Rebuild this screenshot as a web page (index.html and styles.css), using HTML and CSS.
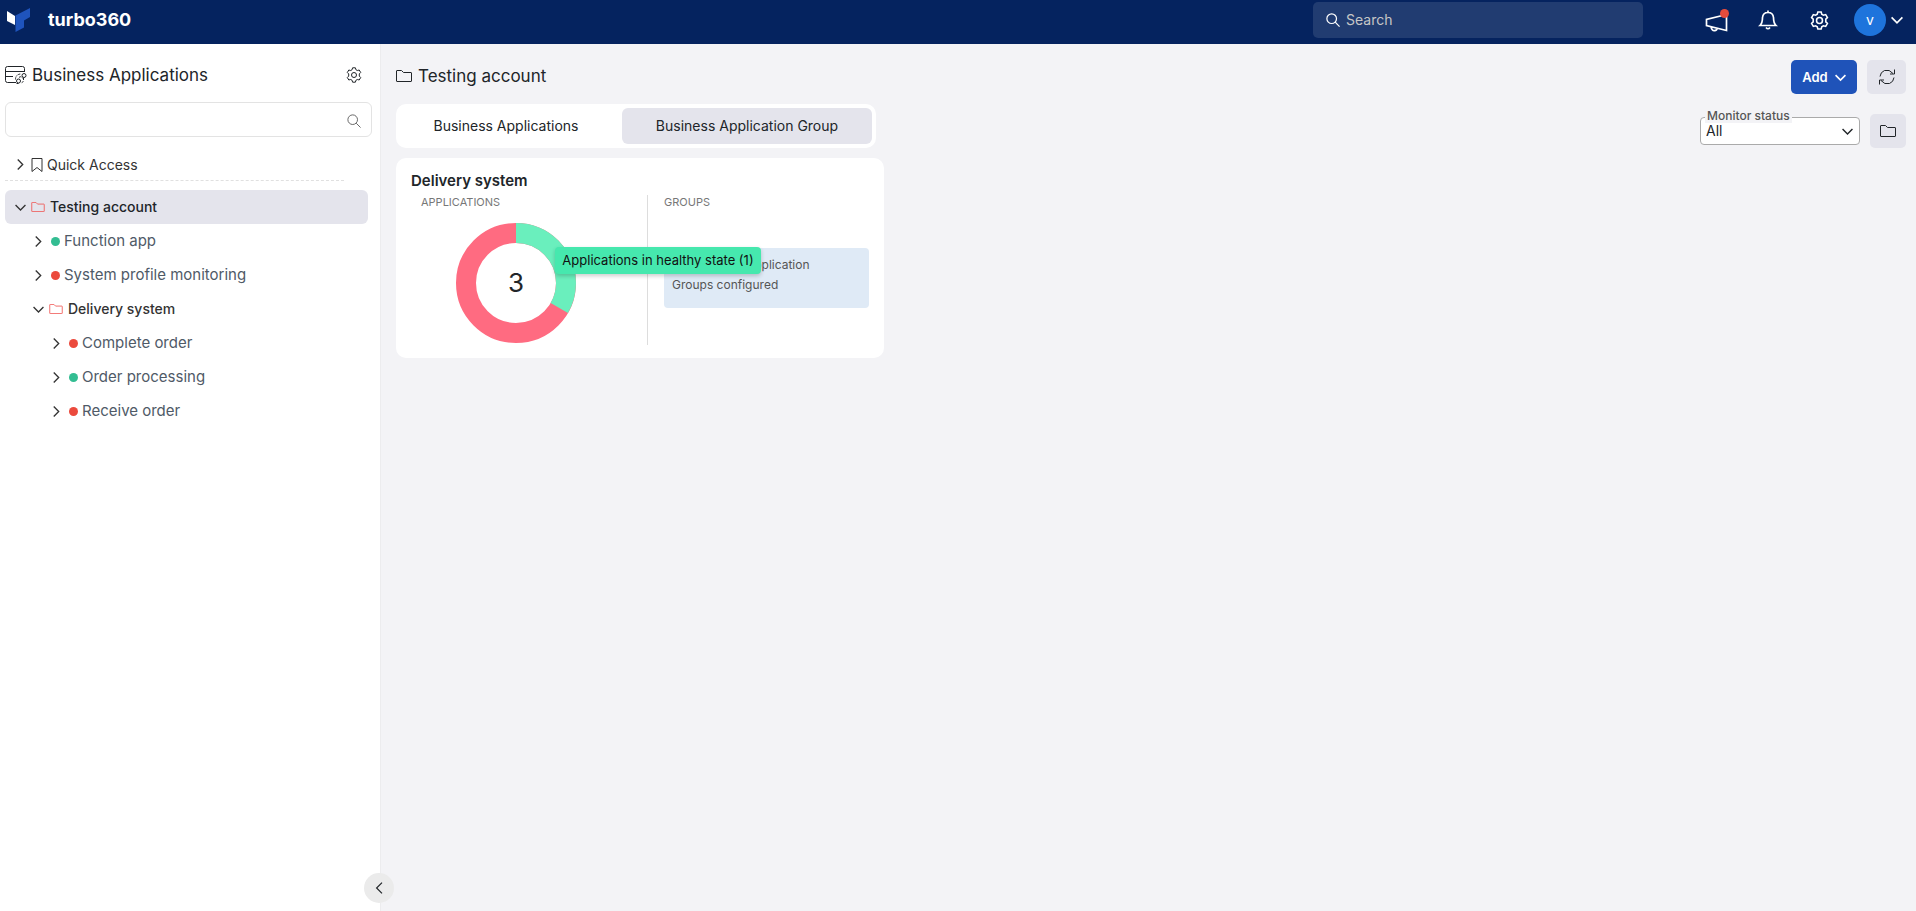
FILE: index.html
```html
<!DOCTYPE html>
<html lang="en">
<head>
<meta charset="utf-8">
<title>turbo360 - Business Applications</title>
<link rel="stylesheet" href="styles.css">
</head>
<body>
<svg class="sprite" aria-hidden="true">
  <symbol id="gear" viewBox="0 0 16 16"><path d="M6.600.8h2.800l.5 1.900 1.400.8 1.900-.5 1.500 2.500-1.400 1.400v2.200l1.400 1.400-1.500 2.500-1.900-.5-1.400.8-.5 1.900H6.600l-.5-1.900-1.400-.8-1.900.5-1.500-2.500 1.400-1.400V6.900L1.300 5.500 2.800 3l1.900.5 1.400-.8z"/><circle cx="8" cy="8" r="2.500"/></symbol>
  <symbol id="lens" viewBox="0 0 16 16"><circle cx="6.500" cy="6.500" r="5.500"/><path d="M10.500 10.500l5 5"/></symbol>
  <symbol id="folder" viewBox="0 0 16 12"><path d="M.5 11V1q0-.5.5-.5h4.500l2 2H15q.5 0 .5.5v8q0 .5-.5.5H1q-.5 0-.5-.5z"/></symbol>
  <symbol id="right" viewBox="0 0 10 10"><path d="M2.500.5L7 5 2.500 9.500"/></symbol>
  <symbol id="down" viewBox="0 0 10 10"><path d="M.5 2.800L5 7.300l4.500-4.500"/></symbol>
</svg>

<header class="topbar">
  <a class="brand" href="#">
    <svg class="logo" viewBox="0 0 23 24"><path fill="#fff" d="M0 3l8 5v9l-8-4z"/><path fill="#1f54bd" d="M8.500 7.500L23 0v9l-6 3.500v7L8.500 24z"/></svg>
    <span>turbo360</span>
  </a>
  <label class="global-search">
    <svg class="i14"><use href="#lens"/></svg>
    <input type="search" placeholder="Search" aria-label="Search">
  </label>
  <nav class="tools">
    <button class="tool" aria-label="Announcements">
      <svg class="megaphone" viewBox="0 0 24 24"><path d="M1.500 11.500v6l20 5V6.500zM6 18.800q.8 4 3.600 3.800 2.400-.2 2.600-2.500"/></svg>
      <span class="alert"></span>
    </button>
    <button class="tool" aria-label="Notifications"><svg class="bell" viewBox="0 0 18 20"><path d="M1 15.500q2.500-2.500 2.500-8Q4 2.500 9 2.500t5.500 5q0 5.500 2.500 8zM9 .5v2M7 17.500q2 2.500 4 0"/></svg></button>
    <button class="tool" aria-label="Settings"><svg class="i18"><use href="#gear"/></svg></button>
    <button class="account" aria-label="Account"><span class="avatar">v</span><svg class="i12"><use href="#down"/></svg></button>
  </nav>
</header>

<div class="shell">
  <aside class="sidebar">
    <div class="side-head">
      <svg class="apps" viewBox="0 0 22 18"><path d="M11 16.500H2.500q-2 0-2-2v-12q0-2 2-2h15q2 0 2 2V6M.5 5.500h19M.5 10.500H8"/><circle cx="19" cy="9.500" r="2"/><circle cx="13.500" cy="15" r="2"/><path stroke-dasharray="2 1" d="M10.500 13.500q0-5 5-5.500M14 11.500q2-2 4 1M18.500 12v2q-.5 3-2.500 3M11.500 17.500h3"/></svg>
      <h1>Business Applications</h1>
      <button class="plain" aria-label="Business application settings"><svg class="i16"><use href="#gear"/></svg></button>
    </div>
    <label class="filter"><input type="search" aria-label="Filter applications"><svg class="i14"><use href="#lens"/></svg></label>
    <div class="row quick">
      <svg class="chev"><use href="#right"/></svg>
      <svg class="bookmark" viewBox="0 0 12 14"><path d="M1 .5h10v13L6 9.500l-5 4z"/></svg>
      <span>Quick Access</span>
    </div>
    <ul class="tree">
      <li class="row group selected"><svg class="chev"><use href="#down"/></svg><svg class="red-folder"><use href="#folder"/></svg><span>Testing account</span></li>
      <li class="row l1"><svg class="chev"><use href="#right"/></svg><i class="dot ok"></i><span>Function app</span></li>
      <li class="row l1"><svg class="chev"><use href="#right"/></svg><i class="dot bad"></i><span>System profile monitoring</span></li>
      <li class="row l1 group"><svg class="chev"><use href="#down"/></svg><svg class="red-folder"><use href="#folder"/></svg><span>Delivery system</span></li>
      <li class="row l2"><svg class="chev"><use href="#right"/></svg><i class="dot bad"></i><span>Complete order</span></li>
      <li class="row l2"><svg class="chev"><use href="#right"/></svg><i class="dot ok"></i><span>Order processing</span></li>
      <li class="row l2"><svg class="chev"><use href="#right"/></svg><i class="dot bad"></i><span>Receive order</span></li>
    </ul>
    <button class="collapse" aria-label="Collapse sidebar"><svg class="i12 flip"><use href="#right"/></svg></button>
  </aside>

  <main class="main">
    <div class="content">
      <div class="title"><svg class="folder"><use href="#folder"/></svg><h2>Testing account</h2></div>
      <div class="tabs" role="tablist">
        <button role="tab" aria-selected="false">Business Applications</button>
        <button role="tab" aria-selected="true" class="active">Business Application Group</button>
      </div>
      <article class="card">
        <h3>Delivery system</h3>
        <div class="panes">
          <section class="pane apps-pane">
            <h4>APPLICATIONS</h4>
            <div class="chart">
              <svg class="donut" viewBox="0 0 120 120"><circle cx="60" cy="60" r="50" stroke="#ff6b81"/><circle cx="60" cy="60" r="50" stroke="#6aefbd" pathLength="3" stroke-dasharray="1 2" transform="rotate(-90 60 60)"/></svg>
              <span class="total">3</span>
              <div class="tooltip" role="tooltip">Applications in healthy state (1)</div>
            </div>
          </section>
          <section class="pane groups-pane">
            <h4>GROUPS</h4>
            <p class="note">No Business Application Groups configured</p>
          </section>
        </div>
      </article>
    </div>
    <div class="actions">
      <div class="action-row">
        <button class="add">Add <svg class="i10"><use href="#down"/></svg></button>
        <button class="square wide" aria-label="Refresh"><svg class="i16" viewBox="0 0 16 16"><path d="M1 7.500Q1.500 3 5.500 1.500q5-1.500 8.500 3M15.500.5v4.500H11M15 8.500q-.5 4.500-4.500 6-5 1.500-8.500-3M.5 15.500V11H5"/></svg></button>
      </div>
      <div class="action-row">
        <div class="field">
          <label for="status">Monitor status</label>
          <select id="status"><option>All</option></select>
          <svg class="i10"><use href="#down"/></svg>
        </div>
        <button class="square" aria-label="Folders"><svg class="folder"><use href="#folder"/></svg></button>
      </div>
    </div>
  </main>
</div>
</body>
</html>
```

FILE: styles.css
```css
* { box-sizing: border-box; }

body {
  margin: 0;
  min-height: 100vh;
  display: flex;
  flex-direction: column;
  font: 14px/20px Inter, "Open Sans", sans-serif;
  color: #212529;
  background: #f3f3f6;
}

h1, h2, h3, h4, p, ul { margin: 0; padding: 0; font-weight: 400; }
button, input, select { font: inherit; color: inherit; }
button { border: 0; padding: 0; background: none; }
svg { fill: none; stroke: currentColor; flex: none; overflow: visible; }

.sprite { position: absolute; width: 0; height: 0; }
.i10 { width: 11px; height: 11px; }
.i12 { width: 12px; height: 12px; }
.i14 { width: 14px; height: 14px; }
.i16 { width: 16px; height: 16px; }
.i18 { width: 19px; height: 19px; }
.flip { transform: scaleX(-1); }
.folder { width: 16px; height: 12px; }

/* Top bar */
.topbar {
  display: flex;
  align-items: center;
  height: 44px;
  padding: 0 13px 0 7px;
  color: #fff;
  background: #05235f;
}
.brand {
  display: flex;
  align-items: center;
  gap: 18px;
  padding-bottom: 4px;
  color: #fff;
  font: 700 18px/24px Inter, sans-serif;
  text-decoration: none;
}
.logo { width: 23px; height: 24px; stroke: none; }
.global-search {
  display: flex;
  align-items: center;
  gap: 6px;
  width: 330px;
  height: 36px;
  margin: 0 62px 4px auto;
  padding: 0 13px;
  border-radius: 5px;
  background: #213c71;
}
.global-search svg { stroke-width: 1.4; }
.global-search input {
  flex: 1;
  min-width: 0;
  border: 0;
  padding: 0;
  outline: 0;
  background: none;
}
.global-search input::placeholder { color: #c6c6c6; opacity: 1; }
.tools { display: flex; align-items: center; padding-bottom: 4px; }
.tool {
  position: relative;
  display: flex;
  justify-content: center;
  width: 24px;
  margin-right: 27px;
}
.tool:nth-child(3) { margin-right: 23px; }
.tool .i18 { stroke-width: 1.3; }
.megaphone { width: 24px; height: 24px; stroke-width: 1.7; }
.bell { width: 18px; height: 20px; stroke-width: 1.7; }
.alert {
  position: absolute;
  top: 1px;
  right: 0;
  width: 9px;
  height: 9px;
  border-radius: 50%;
  background: #e74c3c;
}
.account { display: flex; align-items: center; gap: 5px; }
.avatar {
  width: 32px;
  height: 32px;
  border-radius: 50%;
  line-height: 32px;
  text-align: center;
  background: #1e74dc;
}
.account svg { stroke-width: 1.4; }

/* Sidebar */
.shell { flex: 1; display: flex; }
.sidebar {
  position: relative;
  width: 381px;
  padding: 19px 8px 0 5px;
  border-right: 1px solid #ececee;
  background: #fff;
}
.side-head { display: flex; align-items: center; height: 24px; padding-right: 10px; }
.apps { width: 22px; height: 18px; margin-right: 5px; }
.side-head h1 { flex: 1; font-size: 17px; }
.plain { display: flex; }
.filter {
  display: flex;
  align-items: center;
  height: 35px;
  margin-top: 15px;
  padding: 2px 10px 0 0;
  border: 1px solid #e3e3e3;
  border-radius: 6px;
  color: #555;
}
.filter input { flex: 1; min-width: 0; border: 0; padding: 0 10px; outline: 0; background: none; }
.row {
  display: flex;
  align-items: center;
  height: 34px;
  padding-left: 10px;
  color: #4f5a67;
  font-size: 15px;
}
.chev { width: 11px; height: 11px; margin-right: 5px; color: #333; stroke-width: 1.2; }
.quick {
  height: 32px;
  margin: 12px 28px 9px 0;
  border-bottom: 1px dashed #e0e0e0;
  color: #333;
}
.bookmark { width: 12px; height: 14px; margin-right: 4px; }
.tree { list-style: none; }
.quick, .group { font-size: 14px; }
.group { color: #333; font-weight: 500; }
.red-folder { width: 14px; height: 10px; margin-right: 5px; color: #ef5350; }
.selected { width: 363px; border-radius: 6px; color: #212529; background: #e4e4ec; }
.l1 { padding-left: 28px; }
.l2 { padding-left: 46px; }
.dot { width: 9px; height: 9px; margin: 0 4px 0 2px; border-radius: 50%; }
.ok { background: #33bd92; }
.bad { background: #eb4a3d; }
.collapse {
  position: absolute;
  right: -14px;
  bottom: 8px;
  display: flex;
  align-items: center;
  justify-content: center;
  width: 30px;
  height: 30px;
  border-radius: 50%;
  background: #ebebeb;
}

/* Main */
.main {
  flex: 1;
  display: flex;
  justify-content: space-between;
  align-items: flex-start;
  padding: 16px 10px 16px 15px;
}
.content { width: 488px; }
.title { display: flex; align-items: center; gap: 6px; height: 32px; }
.title h2 { font-size: 17px; }
.tabs {
  display: flex;
  gap: 10px;
  margin: 12px 8px 10px 0;
  padding: 4px;
  border-radius: 10px;
  background: #fff;
}
.tabs button { flex: 1; height: 36px; border-radius: 6px; }
.tabs .active { flex: 0 0 250px; background: #e4e4ec; }
.card { padding: 13px 15px; border-radius: 10px; background: #fff; }
.card h3 { font-size: 15px; font-weight: 600; }
.panes { display: flex; margin-top: 4px; }
.pane { min-height: 150px; }
.pane h4 { color: #777; font-size: 11px; line-height: 14px; }
.apps-pane { width: 237px; padding: 0 26px 0 10px; border-right: 1px solid #ddd; }
.groups-pane { flex: 1; padding-left: 16px; }
.chart { position: relative; width: 120px; margin: 14px auto 0 35px; }
.donut { display: block; width: 120px; height: 120px; stroke-width: 20; }
.total {
  position: absolute;
  inset: 0;
  font-size: 26px;
  line-height: 120px;
  text-align: center;
}
.tooltip {
  position: absolute;
  top: 24px;
  left: 99px;
  z-index: 1;
  width: 206px;
  border-radius: 4px;
  color: #111;
  font-size: 13px;
  line-height: 27px;
  text-align: center;
  white-space: nowrap;
  background: #46e8ae;
  box-shadow: 0 2px 4px #0003;
}
.note {
  min-height: 60px;
  margin-top: 39px;
  padding: 7px 50px 7px 8px;
  border-radius: 4px;
  color: #555;
  font-size: 12px;
  background: #dfeaf6;
}

/* Actions */
.actions { display: flex; flex-direction: column; gap: 20px; }
.action-row { display: flex; justify-content: flex-end; align-items: center; gap: 10px; }
.add {
  display: flex;
  align-items: center;
  justify-content: center;
  gap: 7px;
  width: 66px;
  height: 34px;
  border-radius: 5px;
  color: #fff;
  font-size: 13px;
  font-weight: 600;
  background: #1f53b9;
}
.add svg { stroke-width: 1.5; }
.square {
  display: flex;
  align-items: center;
  justify-content: center;
  width: 36px;
  height: 34px;
  border-radius: 5px;
  background: #e4e4ec;
}
.wide { width: 39px; }
.field { position: relative; width: 160px; }
.field label {
  position: absolute;
  top: -8px;
  left: 5px;
  padding: 0 2px;
  color: #555;
  font-size: 12px;
  font-weight: 500;
  line-height: 14px;
  background: #f3f3f6;
}
.field select {
  display: block;
  width: 100%;
  height: 28px;
  padding: 0 5px;
  border: 1px solid #aaa;
  border-radius: 4px;
  appearance: none;
  background: #fff;
}
.field svg { position: absolute; top: 9px; right: 7px; stroke-width: 1.3; pointer-events: none; }
```
